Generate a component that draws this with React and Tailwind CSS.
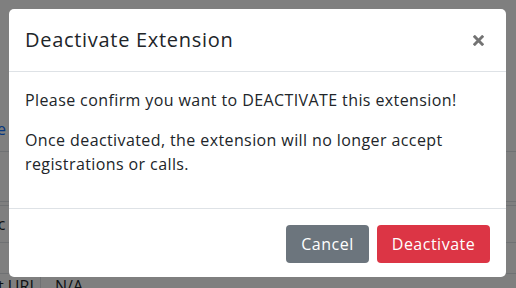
import React from 'react';

// Background page rows (mostly hidden behind the modal)
function BackgroundPage() {
    return (
        <div className="h-[288px] w-[516px] overflow-hidden bg-white text-[16px] text-[#212529]" style={{ fontFamily: '"Open Sans", sans-serif' }}>
            <div className="-ml-[12px] flex flex-col">
                <div className="h-[58px]" />
                <div className="h-[22px] leading-[22px]">::</div>
                <div className="h-[24px] leading-[24px]">::</div>
                <div className="h-[38px] pt-[12px] leading-[26px] text-[#0d6efd]">ee</div>
                <div className="h-[10px] border-b border-[#dee2e6]" />
                <div className="h-[50px] border-b border-[#dee2e6]" />
                <div className="h-[4px] border-b border-[#dee2e6]" />
                <div className="h-[37px] border-b border-[#dee2e6] leading-[37px]">oc</div>
                <div className="h-[31px] border-b border-[#dee2e6]" />
                <div className="flex h-[24px] leading-[24px]">
                    <span className="w-[53px] border-r border-[#dee2e6] pl-[10px]">t URL</span>
                    <span className="pl-[14px]">N/A</span>
                </div>
            </div>
        </div>
    );
}

export default function App() {
    return (
        <div className="relative h-[288px] w-[516px] overflow-hidden">
            <BackgroundPage />
            <div className="absolute inset-0 bg-black/50" />

            {/* Modal */}
            <div
                className="absolute left-[9px] top-[9px] w-[497px] rounded-[5px] bg-white text-[#212529]"
                style={{ fontFamily: '"Open Sans", sans-serif' }}
            >
                <div className="flex items-center justify-between border-b border-[#dee2e6] px-4 py-4">
                    <h5 className="text-[20px] font-medium leading-[30px] tracking-[0.7px]">Deactivate Extension</h5>
                    <button className="mr-[5px] flex h-[14px] w-[14px] items-center justify-center">
                        <svg width="11" height="11" viewBox="0 0 12 12">
                            <path d="M2 2 L10 10 M10 2 L2 10" stroke="#737373" strokeWidth="3.2" strokeLinecap="square" />
                        </svg>
                    </button>
                </div>

                <div className="p-4 text-[16px] leading-[24px] tracking-[0.4px]">
                    <p className="mb-4">Please confirm you want to DEACTIVATE this extension!</p>
                    <p className="mb-4">Once deactivated, the extension will no longer accept registrations or calls.</p>
                </div>

                <div className="flex items-center justify-end gap-2 border-t border-[#dee2e6] px-4 pb-[14px] pt-4">
                    <button className="h-[38px] w-[83px] rounded-[4px] bg-[#6c757d] text-[16px] tracking-[0.5px] text-white">Cancel</button>
                    <button className="h-[38px] w-[113px] rounded-[4px] bg-[#dc3545] text-[16px] tracking-[0.5px] text-white">Deactivate</button>
                </div>
            </div>
        </div>
    );
}
